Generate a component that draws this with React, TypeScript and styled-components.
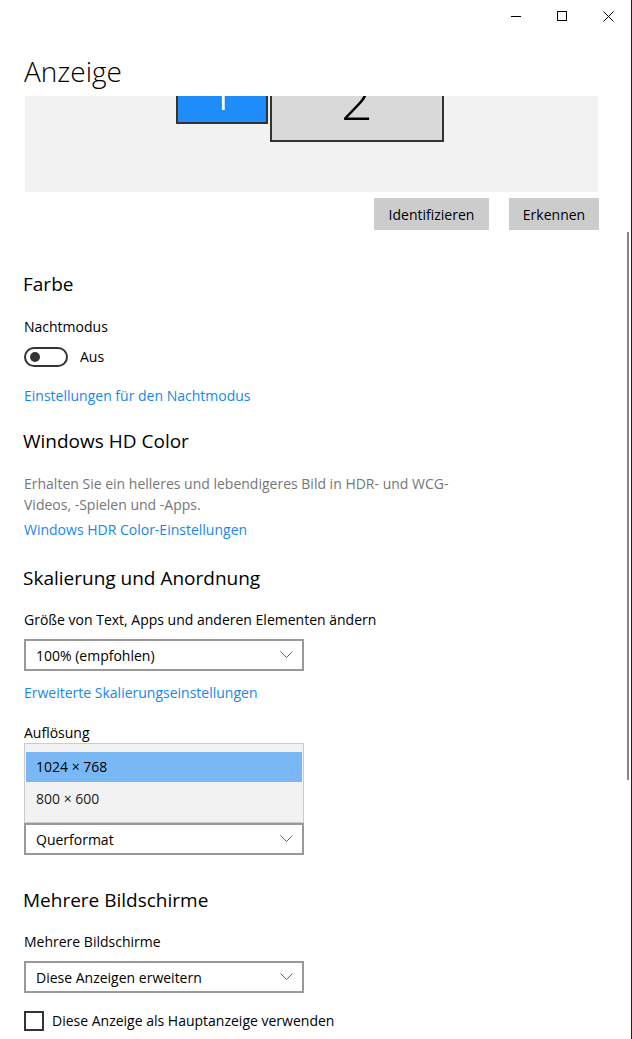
import React from 'react';
import styled, { createGlobalStyle } from 'styled-components';

const GlobalStyle = createGlobalStyle`
  html, body {
    margin: 0;
    padding: 0;
    background: #ffffff;
  }
  body {
    font-family: "Open Sans", "Noto Sans", "Liberation Sans", sans-serif;
    color: #000000;
  }
`;

const Window = styled.div`
  position: relative;
  width: 632px;
  height: 1039px;
  box-sizing: border-box;
  border-right: 1px solid #1f1f1f;
  background: #ffffff;
  overflow: hidden;
  display: flex;
  flex-direction: column;
`;

const TitleBar = styled.div`
  display: flex;
  justify-content: flex-end;
  height: 32px;
  flex-shrink: 0;
`;

const CaptionButton = styled.div`
  width: 46px;
  height: 32px;
  display: flex;
  align-items: center;
  justify-content: center;
`;

const PageTitle = styled.h1`
  margin: 19px 0 0 24px;
  font-size: 28px;
  line-height: 40px;
  font-weight: 300;
  flex-shrink: 0;
`;

const Scroller = styled.div`
  flex: 1;
  overflow: hidden;
  padding: 5px 33px 0 24px;
`;

const ScrollThumb = styled.div`
  position: absolute;
  left: 627px;
  top: 232px;
  width: 2px;
  height: 548px;
  background: #858585;
`;

const Preview = styled.div`
  position: relative;
  height: 96px;
  margin-left: 1px;
  background: #f2f2f2;
  overflow: hidden;
`;

const Monitor = styled.div<{ $left: number; $top: number; $w: number; $h: number; $active?: boolean }>`
  position: absolute;
  left: ${p => p.$left}px;
  top: ${p => p.$top}px;
  width: ${p => p.$w}px;
  height: ${p => p.$h}px;
  box-sizing: border-box;
  border: 2px solid #333333;
  background: ${p => (p.$active ? '#1e8cf9' : '#d9d9d9')};
  color: ${p => (p.$active ? '#ffffff' : '#000000')};
  display: flex;
  align-items: center;
  justify-content: center;
  font-size: 56px;
  font-weight: 300;
  line-height: 1;
`;

const ButtonRow = styled.div`
  display: flex;
  justify-content: flex-end;
  gap: 20px;
  margin: 6px -1px 0 0;
`;

const GrayButton = styled.button<{ $w: number }>`
  width: ${p => p.$w}px;
  height: 32px;
  border: none;
  background: #cccccc;
  font-family: inherit;
  font-size: 14px;
  color: #000000;
  padding: 0;
`;

const SectionTitle = styled.h2<{ $gap: number }>`
  margin: ${p => p.$gap}px 0 0 -1px;
  font-size: 19px;
  line-height: 28px;
  font-weight: 400;
`;

const Label = styled.div<{ $gap: number }>`
  margin-top: ${p => p.$gap}px;
  font-size: 14px;
  line-height: 20px;
`;

const Description = styled.div<{ $gap: number }>`
  margin-top: ${p => p.$gap}px;
  width: 450px;
  font-size: 14px;
  line-height: 21px;
  color: #767676;
`;

const Link = styled.a<{ $gap: number }>`
  display: block;
  margin-top: ${p => p.$gap}px;
  font-size: 14px;
  line-height: 20px;
  color: #1a86e6;
  text-decoration: none;
`;

const ToggleRow = styled.div`
  display: flex;
  align-items: center;
  gap: 12px;
  margin-top: 10px;
  font-size: 14px;
  line-height: 20px;
`;

const ToggleTrack = styled.div`
  width: 44px;
  height: 20px;
  box-sizing: border-box;
  border: 2px solid #333333;
  border-radius: 10px;
  display: flex;
  align-items: center;
  padding-left: 4px;
`;

const ToggleKnob = styled.div`
  width: 10px;
  height: 10px;
  border-radius: 50%;
  background: #333333;
`;

const SelectBox = styled.div<{ $gap: number }>`
  display: flex;
  align-items: center;
  justify-content: space-between;
  margin-top: ${p => p.$gap}px;
  width: 280px;
  height: 32px;
  box-sizing: border-box;
  border: 2px solid #999999;
  padding: 0 9px 0 10px;
  font-size: 14px;
  background: #ffffff;
`;

/* wraps the open resolution list so it can float over the controls below it */
const SelectArea = styled.div`
  position: relative;
  display: flow-root;
`;

const Popup = styled.div`
  position: absolute;
  left: 0;
  top: 0;
  width: 280px;
  height: 80px;
  box-sizing: border-box;
  border: 1px solid #cccccc;
  background: #f2f2f2;
  padding: 8px 1px 0;
  z-index: 2;
`;

const PopupItem = styled.div<{ $selected?: boolean }>`
  height: 30px;
  line-height: 30px;
  padding-left: 10px;
  font-size: 14px;
  color: ${p => (p.$selected ? '#000000' : '#222222')};
  background: ${p => (p.$selected ? '#79b8f4' : 'transparent')};
  margin-bottom: 2px;
`;

const CheckRow = styled.label`
  display: flex;
  align-items: center;
  gap: 8px;
  margin-top: 18px;
  font-size: 14px;
  line-height: 20px;
`;

const CheckBox = styled.span`
  width: 20px;
  height: 20px;
  box-sizing: border-box;
  border: 2px solid #333333;
`;

const Chevron = () => (
  <svg width="13" height="8" viewBox="0 0 13 8">
    <path d="M0.5 0.5 L6.5 6.5 L12.5 0.5" fill="none" stroke="#666666" strokeWidth="1" />
  </svg>
);

const Select: React.FC<{ value: string; gap: number }> = ({ value, gap }) => (
  <SelectBox $gap={gap}>
    <span>{value}</span>
    <Chevron />
  </SelectBox>
);

export default function App() {
  return (
    <>
      <GlobalStyle />
      <Window>
        <TitleBar>
          <CaptionButton>
            <svg width="10" height="10" viewBox="0 0 10 10">
              <path d="M0 5.5 H10" stroke="#000" strokeWidth="1" />
            </svg>
          </CaptionButton>
          <CaptionButton>
            <svg width="10" height="10" viewBox="0 0 10 10">
              <rect x="0.5" y="0.5" width="9" height="9" fill="none" stroke="#000" strokeWidth="1" />
            </svg>
          </CaptionButton>
          <CaptionButton>
            <svg width="11" height="11" viewBox="0 0 11 11">
              <path d="M0.5 0.5 L10.5 10.5 M10.5 0.5 L0.5 10.5" stroke="#000" strokeWidth="1" />
            </svg>
          </CaptionButton>
        </TitleBar>

        <PageTitle>Anzeige</PageTitle>

        <Scroller>
          <Preview>
            <Monitor $left={151} $top={-44} $w={92} $h={72} $active>1</Monitor>
            <Monitor $left={245} $top={-42} $w={174} $h={88}>2</Monitor>
          </Preview>
          <ButtonRow>
            <GrayButton $w={115}>Identifizieren</GrayButton>
            <GrayButton $w={90}>Erkennen</GrayButton>
          </ButtonRow>

          <SectionTitle $gap={40}>Farbe</SectionTitle>
          <Label $gap={19}>Nachtmodus</Label>
          <ToggleRow>
            <ToggleTrack>
              <ToggleKnob />
            </ToggleTrack>
            <span>Aus</span>
          </ToggleRow>
          <Link $gap={19}>Einstellungen für den Nachtmodus</Link>

          <SectionTitle $gap={21}>Windows HD Color</SectionTitle>
          <Description $gap={18}>
            Erhalten Sie ein helleres und lebendigeres Bild in HDR- und WCG-Videos, -Spielen und -Apps.
          </Description>
          <Link $gap={5}>Windows HDR Color-Einstellungen</Link>

          <SectionTitle $gap={24}>Skalierung und Anordnung</SectionTitle>
          <Label $gap={18}>Größe von Text, Apps und anderen Elementen ändern</Label>
          <Select gap={9} value="100% (empfohlen)" />
          <Link $gap={12}>Erweiterte Skalierungseinstellungen</Link>

          <Label $gap={20}>Auflösung</Label>
          <SelectArea>
            <Popup>
              <PopupItem $selected>1024 × 768</PopupItem>
              <PopupItem>800 × 600</PopupItem>
            </Popup>
            <Select gap={5} value="1024 × 768" />
            <Label $gap={14}>Ausrichtung</Label>
          </SelectArea>
          <Select gap={9} value="Querformat" />

          <SectionTitle $gap={31}>Mehrere Bildschirme</SectionTitle>
          <Label $gap={18}>Mehrere Bildschirme</Label>
          <Select gap={9} value="Diese Anzeigen erweitern" />
          <CheckRow>
            <CheckBox />
            <span>Diese Anzeige als Hauptanzeige verwenden</span>
          </CheckRow>
        </Scroller>

        <ScrollThumb />
      </Window>
    </>
  );
}
